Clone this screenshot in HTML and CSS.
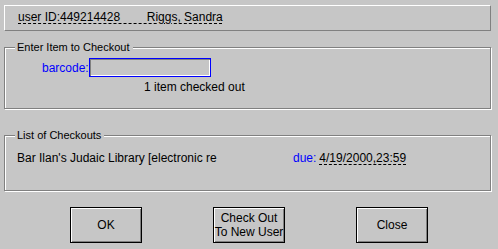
FILE: index.html
```html
<!DOCTYPE html>
<html lang = 'en-US'>
	<head>
		<meta charset = 'utf-8' name = 'viewport' content = 'width = device-width, initial-scale = 1'>
		<title>Checkout</title>
		<link rel="stylesheet" href="styles.css">
	</head>
	<body>
		<div class = 'user-bar'>
			<span class = 'dashed'>user ID:449214428        Riggs, Sandra</span>
		</div>

		<fieldset class = 'group group-entry'>
			<legend class = 'group-title'>Enter Item to Checkout</legend>
			<div class = 'barcode-row'>
				<label class = 'field-label' for = 'barcode'>barcode:</label>
				<input class = 'barcode-input' id = 'barcode' type = 'text'>
			</div>
			<p class = 'status'>1 item checked out</p>
		</fieldset>

		<fieldset class = 'group group-list'>
			<legend class = 'group-title'>List of Checkouts</legend>
			<div class = 'checkout-row'>
				<span class = 'checkout-title'>Bar Ilan's Judaic Library [electronic re</span>
				<span class = 'field-label'>due:</span>
				<span class = 'dashed'>4/19/2000,23:59</span>
			</div>
		</fieldset>

		<div class = 'buttons'>
			<button class = 'btn'>OK</button>
			<button class = 'btn'>Check Out<br>To New User</button>
			<button class = 'btn'>Close</button>
		</div>
	</body>
</html>
```
FILE: styles.css
```css
body {
	margin: 0;
	padding-top: 5px;
	background: #c6c6c6;
	font-family: 'Liberation Sans', Arial, sans-serif;
	font-size: 12px;
	line-height: 14px;
	color: #000;
}
.user-bar {
	box-sizing: border-box;
	width: 487px;
	height: 26px;
	margin-left: 4px;
	padding: 4px 0 0 13px;
	border-top: 1px solid #fff;
	border-left: 1px solid #fff;
	border-right: 1px solid #808080;
	border-bottom: 1px solid #808080;
}
.dashed {
	text-decoration: underline dashed;
	text-underline-offset: 2px;
	white-space: pre;
}
.group {
	box-sizing: border-box;
	width: 487px;
	min-width: 0;
	margin: 10px 0 0 4px;
	padding: 0 0 0 10px;
	border: 1px solid #808080;
	box-shadow: 1px 1px 0 #fff, inset 1px 1px 0 #fff;
}
.group-title {
	margin: 0;
	padding: 0 3px 0 2px;
	font-size: 11px;
	line-height: 13px;
	background: #c6c6c6;
}
.group-entry {
	padding-bottom: 14px;
}
.group-list {
	margin-top: 20px;
	padding-bottom: 25px;
}
.barcode-row {
	display: flex;
	align-items: center;
	margin: 4px 0 0 27px;
}
.field-label {
	color: #0000ff;
}
.barcode-input {
	box-sizing: border-box;
	width: 122px;
	height: 19px;
	margin: 0;
	padding: 0 2px;
	border: 1px solid #0000ff;
	box-shadow: inset 1px 1px 0 #808080, inset -1px -1px 0 #fff;
	background: #c6c6c6;
	font: inherit;
	outline: none;
}
.status {
	margin: 3px 0 0 129px;
}
.checkout-row {
	display: flex;
	margin: 9px 0 0 2px;
}
.checkout-title {
	width: 276px;
	overflow: hidden;
	white-space: nowrap;
}
.field-label + .dashed {
	margin-left: 3px;
}
.buttons {
	display: flex;
	gap: 71px;
	margin: 16px 0 0 70px;
}
.btn {
	box-sizing: border-box;
	width: 72px;
	height: 36px;
	padding: 0;
	border: 1px solid #000;
	box-shadow: inset 1px 1px 0 #fff, inset -1px -1px 0 #808080;
	background: #c6c6c6;
	font: inherit;
	color: #000;
}
```
